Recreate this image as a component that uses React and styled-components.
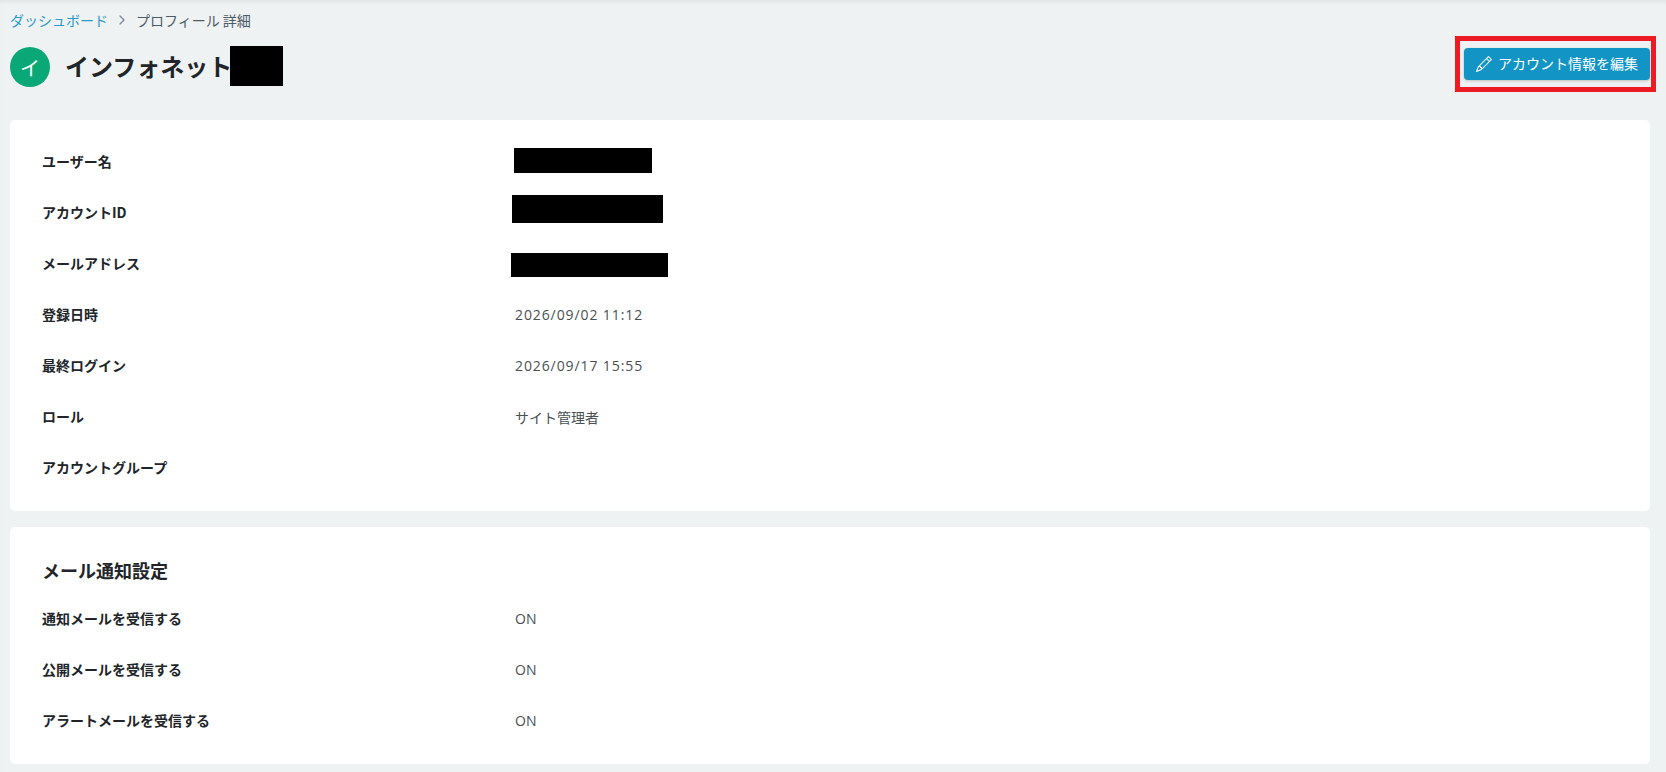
import React from 'react'
import styled, { createGlobalStyle } from 'styled-components'
import { BsPencil } from 'react-icons/bs'
import { LuChevronRight } from 'react-icons/lu'

const GlobalStyle = createGlobalStyle`
  html, body {
    margin: 0;
    padding: 0;
    height: 100%;
    background: #eef2f3;
  }
  body {
    font-family: "Noto Sans CJK JP", "Open Sans", sans-serif;
    color: #212529;
    overflow: hidden;
  }
`

const profileRows = [
  { label: 'ユーザー名', mask: { $w: 138, $h: 25, $x: -1, $y: -3 } },
  { label: 'アカウントID', mask: { $w: 151, $h: 28, $x: -3, $y: -7 } },
  { label: 'メールアドレス', mask: { $w: 157, $h: 24, $x: -4, $y: 3 } },
  { label: '登録日時', value: '2026/09/02 11:12', date: true },
  { label: '最終ログイン', value: '2026/09/17 15:55', date: true },
  { label: 'ロール', value: 'サイト管理者' },
  { label: 'アカウントグループ' },
]

const mailRows = [
  { label: '通知メールを受信する', value: 'ON' },
  { label: '公開メールを受信する', value: 'ON' },
  { label: 'アラートメールを受信する', value: 'ON' },
]

function InfoRows({ rows }) {
  return rows.map((row) => (
    <Row key={row.label}>
      <Label>{row.label}</Label>
      {row.mask ? <Mask {...row.mask} /> : <Value $date={row.date}>{row.value}</Value>}
    </Row>
  ))
}

export default function App() {
  return (
    <Page>
      <GlobalStyle />
      <Breadcrumb>
        <Crumb href="#">ダッシュボード</Crumb>
        <LuChevronRight size={16} color="#7c8b95" />
        <span>プロフィール 詳細</span>
      </Breadcrumb>
      <TitleBar>
        <TitleGroup>
          <Avatar>イ</Avatar>
          <Title>インフォネット</Title>
          <Mask $w={53} $h={40} $x={-2} />
        </TitleGroup>
        <EditWrap>
          <EditButton>
            <BsPencil size={16} />
            <EditLabel>アカウント情報を編集</EditLabel>
          </EditButton>
        </EditWrap>
      </TitleBar>
      <Card>
        <InfoRows rows={profileRows} />
      </Card>
      <Card $mail>
        <Heading>メール通知設定</Heading>
        <InfoRows rows={mailRows} />
      </Card>
    </Page>
  )
}

const Page = styled.div`
  height: 772px;
  padding: 0 16px 0 10px;
  box-sizing: border-box;
  box-shadow: inset 0 4px 4px -2px rgba(0, 0, 0, 0.06);
`

const Breadcrumb = styled.nav`
  height: 40px;
  display: flex;
  align-items: center;
  gap: 6px;
  font-size: 14px;
  color: #4d5b64;
`

const Crumb = styled.a`
  color: #2b9ac8;
  text-decoration: none;
`

const TitleBar = styled.div`
  height: 40px;
  margin-top: 6px;
  display: flex;
  align-items: center;
  justify-content: space-between;
`

const TitleGroup = styled.div`
  display: flex;
  align-items: center;
`

const Avatar = styled.div`
  width: 40px;
  height: 40px;
  margin: 2px 15px 0 0;
  border-radius: 50%;
  background: #0aa876;
  color: #fff;
  font-size: 20px;
  display: flex;
  align-items: center;
  justify-content: center;
`

const Title = styled.h1`
  margin: 0;
  font-size: 24px;
  line-height: 40px;
  font-weight: 700;
  color: #212529;
`

const Mask = styled.div`
  width: ${(p) => p.$w}px;
  height: ${(p) => p.$h}px;
  margin-left: ${(p) => p.$x || 0}px;
  margin-top: ${(p) => p.$y || 0}px;
  background: #000;
  flex: none;
`

const EditWrap = styled.div`
  position: relative;
  margin-top: -4px;
  &::after {
    content: '';
    position: absolute;
    inset: -12px -6px -12px -9px;
    border: 5px solid #ed1c24;
    pointer-events: none;
  }
`

const EditButton = styled.button`
  width: 186px;
  height: 32px;
  padding: 0;
  border: 0;
  border-radius: 4px;
  background: #1295c5;
  color: #fff;
  font: inherit;
  font-size: 14px;
  display: flex;
  align-items: center;
  justify-content: center;
  gap: 6px;
  box-shadow: 0 1px 3px rgba(0, 0, 0, 0.2);
`

const EditLabel = styled.span`
  padding-bottom: 3px;
`

const Card = styled.section`
  margin-top: ${(p) => (p.$mail ? '16px' : '34px')};
  height: ${(p) => (p.$mail ? '237px' : '391px')};
  box-sizing: border-box;
  padding: ${(p) => (p.$mail ? '25px' : '16px')} 32px 0;
  background: #fff;
  border-radius: 5px;
`

const Heading = styled.h2`
  margin: 0 0 5px;
  font-size: 18px;
  line-height: 36px;
  font-weight: 700;
  color: #212529;
`

const Row = styled.div`
  height: 51px;
  display: grid;
  grid-template-columns: 473px 1fr;
  align-items: center;
`

const Label = styled.div`
  padding-bottom: 2px;
  font-size: 14px;
  font-weight: 700;
  color: #212529;
`

const Value = styled.div`
  font-family: "Open Sans", "Noto Sans CJK JP", sans-serif;
  font-size: 14px;
  letter-spacing: ${(p) => (p.$date ? '0.9px' : '0')};
  color: #4a4f54;
`
